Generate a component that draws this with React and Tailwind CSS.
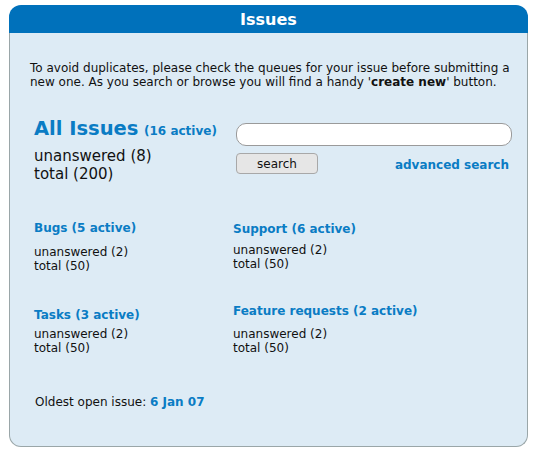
import React, { useState } from "react";

const categories = [
  { name: "Bugs", active: 5, unanswered: 2, total: 50 },
  { name: "Support", active: 6, unanswered: 2, total: 50 },
  { name: "Tasks", active: 3, unanswered: 2, total: 50 },
  { name: "Feature requests", active: 2, unanswered: 2, total: 50 },
];

const Category = ({ cat, className, gap }) => (
  <div className={className}>
    <a href="#" className="block font-bold text-[#0a7cc4] text-[12px] leading-[14px]">
      {cat.name} ({cat.active} active)
    </a>
    <div className={`${gap} text-[12px] leading-[14px] text-[#111]`}>
      <div>unanswered ({cat.unanswered})</div>
      <div>total ({cat.total})</div>
    </div>
  </div>
);

export default function App() {
  const [query, setQuery] = useState("");

  return (
    <div className="w-[538px] h-[453px] bg-white pt-[5px] pl-[9px] font-['DejaVu_Sans',sans-serif]">
      <div className="w-[519px]">
        {/* title bar */}
        <div className="h-[28px] pt-[1px] rounded-t-[12px] bg-[#0071bb] flex items-center justify-center text-white font-bold text-[16px]">
          Issues
        </div>

        <div className="h-[414px] bg-[#ddebf5] border border-t-0 border-[#9aa6a8] rounded-b-[12px] pt-[28px] pl-[20px] pr-[10px]">
          <p className="text-[12px] leading-[14px] text-[#111]">
            To avoid duplicates, please check the queues for your issue before submitting a new one. As you search or
            browse you will find a handy '<b>create new</b>' button.
          </p>

          <div className="flex mt-[27px] pl-[4px]">
            <div className="w-[202px] pt-[1px]">
              <div className="leading-[24px] text-[#0a7cc4] font-bold">
                <span className="text-[19.5px]">All Issues</span>{" "}
                <span className="text-[12px]">(16 active)</span>
              </div>
              <div className="mt-[4px] text-[15px] leading-[18px] text-[#111]">
                <div>unanswered (8)</div>
                <div>total (200)</div>
              </div>
            </div>

            <div className="w-[276px] pt-[7px]">
              <input
                type="text"
                value={query}
                onChange={(e) => setQuery(e.target.value)}
                className="block w-full h-[23px] bg-white border border-[#9a9a9a] rounded-[10px] px-2 outline-none"
              />
              <div className="flex items-end justify-between mt-[7px]">
                <button className="w-[82px] h-[21px] bg-[#e6e6e6] border border-[#a8a8a8] rounded-[4px] text-[12px] text-[#111]">
                  search
                </button>
                <a href="#" className="font-bold text-[12px] leading-[18px] text-[#0a7cc4] pr-[3px]">
                  advanced search
                </a>
              </div>
            </div>
          </div>

          <div className="grid grid-cols-[199px_1fr] pl-[4px] mt-[38px]">
            <Category cat={categories[0]} gap="mt-[10px]" />
            <Category cat={categories[1]} className="mt-[1px]" gap="mt-[7px]" />
            <Category cat={categories[2]} className="mt-[35px]" gap="mt-[5px]" />
            <Category cat={categories[3]} className="mt-[31px]" gap="mt-[9px]" />
          </div>

          <div className="mt-[38px] pl-[5px] text-[12px] text-[#111]">
            Oldest open issue: <a href="#" className="font-bold text-[#0a7cc4]">6 Jan 07</a>
          </div>
        </div>
      </div>
    </div>
  );
}
